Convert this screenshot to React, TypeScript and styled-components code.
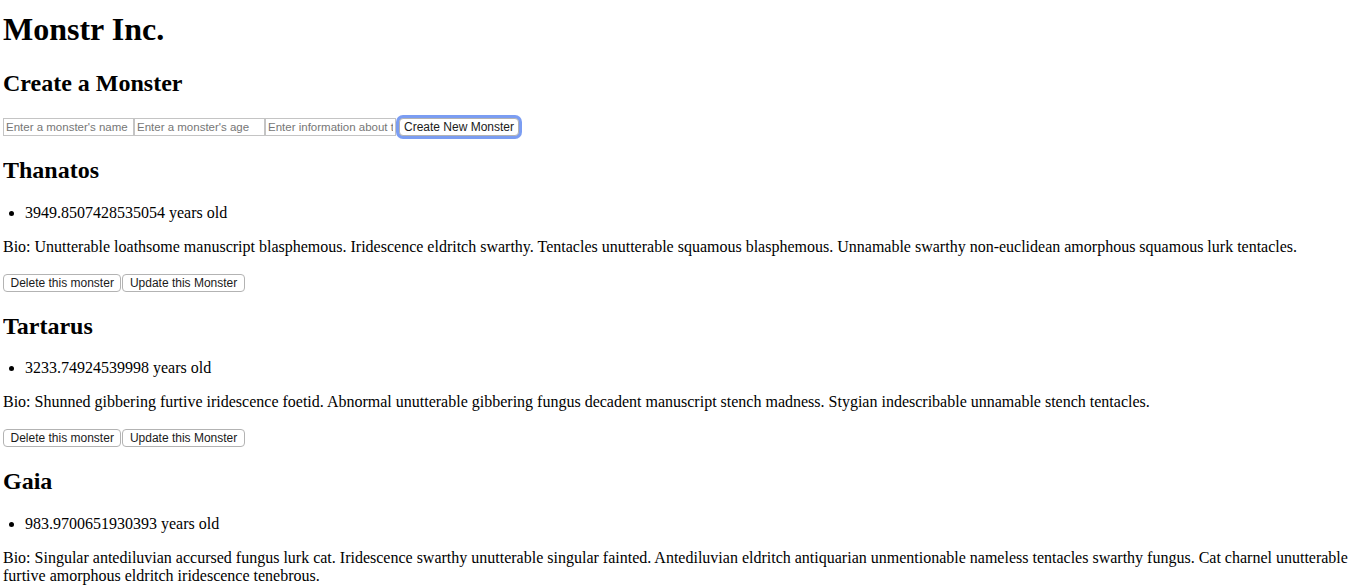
import React from "react";
import styled, { createGlobalStyle } from "styled-components";

type Monster = {
  id: number;
  name: string;
  age: string;
  bio: string;
};

const MONSTERS: Monster[] = [
  {
    id: 1,
    name: "Thanatos",
    age: "3949.8507428535054",
    bio: "Unutterable loathsome manuscript blasphemous. Iridescence eldritch swarthy. Tentacles unutterable squamous blasphemous. Unnamable swarthy non-euclidean amorphous squamous lurk tentacles.",
  },
  {
    id: 2,
    name: "Tartarus",
    age: "3233.74924539998",
    bio: "Shunned gibbering furtive iridescence foetid. Abnormal unutterable gibbering fungus decadent manuscript stench madness. Stygian indescribable unnamable stench tentacles.",
  },
  {
    id: 3,
    name: "Gaia",
    age: "983.9700651930393",
    bio: "Singular antediluvian accursed fungus lurk cat. Iridescence swarthy unutterable singular fainted. Antediluvian eldritch antiquarian unmentionable nameless tentacles swarthy fungus. Cat charnel unutterable furtive amorphous eldritch iridescence tenebrous.",
  },
];

const GlobalStyle = createGlobalStyle`
  body {
    margin: 0 3px;
    background: #ffffff;
    color: #000000;
    font-family: "Liberation Serif", "Times New Roman", serif;
    font-size: 16px;
  }
`;

const Page = styled.div`
  padding-top: 1px;
  margin-top: -11px;
`;

const Title = styled.h1`
  font-size: 32px;
  font-weight: bold;
  margin: 21.44px 0;
`;

const SectionTitle = styled.h2`
  font-size: 24px;
  font-weight: bold;
  margin: 19.92px 0;
`;

const Form = styled.form`
  display: flex;
  align-items: center;
  margin-top: 1px;
`;

const TextInput = styled.input`
  box-sizing: border-box;
  width: 131px;
  height: 18px;
  margin: 0;
  padding: 0 2px;
  border: 1px solid #c4c4c4;
  border-radius: 0;
  font-family: "Liberation Sans", Arial, sans-serif;
  font-size: 11.5px;
  color: #000;
  outline: none;

  &::placeholder {
    color: #767676;
  }
`;

const Button = styled.button<{ $focused?: boolean }>`
  box-sizing: border-box;
  height: 18px;
  margin: 0 0 0 1px;
  padding: 0 ${({ $focused }) => ($focused ? "4px" : "6.5px")};
  background: #ffffff;
  border: 1px solid #b3b3b3;
  border-radius: 4px;
  font-family: "Liberation Sans", Arial, sans-serif;
  font-size: 12px;
  line-height: 16px;
  color: #1a1a1a;
  box-shadow: ${({ $focused }) =>
    $focused ? "0 0 0 3px rgba(100, 140, 240, 0.85)" : "none"};
  cursor: pointer;

  &:first-child {
    margin-left: 0;
  }
`;

const FocusWrap = styled.span`
  display: inline-flex;
  margin: 1px 0 1px 3px;
`;

const AgeList = styled.ul`
  margin: 16px 0;
  padding-left: 22px;
`;

const Bio = styled.p`
  margin: 16px 0;
`;

const Actions = styled.div`
  display: flex;
  align-items: center;
  padding: 2px 0 1px;
`;

const MonsterCard: React.FC<{ monster: Monster }> = ({ monster }) => (
  <section>
    <SectionTitle>{monster.name}</SectionTitle>
    <AgeList>
      <li>{monster.age} years old</li>
    </AgeList>
    <Bio>Bio: {monster.bio}</Bio>
    <Actions>
      <Button type="button">Delete this monster</Button>
      <Button type="button">Update this Monster</Button>
    </Actions>
  </section>
);

const App: React.FC = () => {
  return (
    <>
      <GlobalStyle />
      <Page>
        <Title>Monstr Inc.</Title>
        <SectionTitle>Create a Monster</SectionTitle>
        <Form onSubmit={(e) => e.preventDefault()}>
          <TextInput placeholder="Enter a monster's name" />
          <TextInput placeholder="Enter a monster's age" />
          <TextInput placeholder="Enter information about the monster" />
          <FocusWrap>
            <Button type="submit" $focused>
              Create New Monster
            </Button>
          </FocusWrap>
        </Form>
        {MONSTERS.map((m) => (
          <MonsterCard key={m.id} monster={m} />
        ))}
      </Page>
    </>
  );
};

export default App;
